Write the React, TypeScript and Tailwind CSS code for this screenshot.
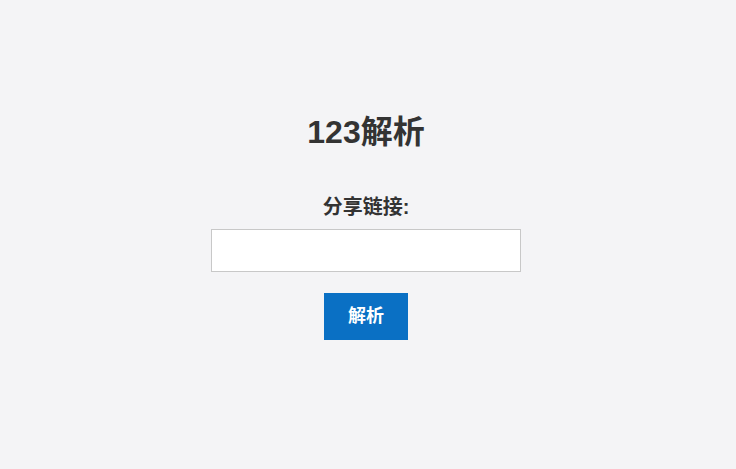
export default function App() {
  return (
    <div
      className="min-h-[469px] w-full bg-[#f4f4f6] flex flex-col items-center pt-[113px] pr-[4px]"
      style={{ fontFamily: '"Liberation Sans", "Noto Sans CJK SC", sans-serif' }}
    >
      <h1 className="text-[32px] leading-[38px] font-bold text-[#333333]">123解析</h1>
      <label className="mt-[44px] text-[20px] leading-[24px] font-bold text-[#333333]">分享链接:</label>
      <input
        type="text"
        className="mt-[10px] w-[310px] h-[43px] bg-white border border-[#c8c8c8] outline-none px-2"
      />
      <button className="mt-[21px] w-[84px] h-[47px] bg-[#0a70c4] text-white text-[18px] font-bold">
        解析
      </button>
    </div>
  );
}
